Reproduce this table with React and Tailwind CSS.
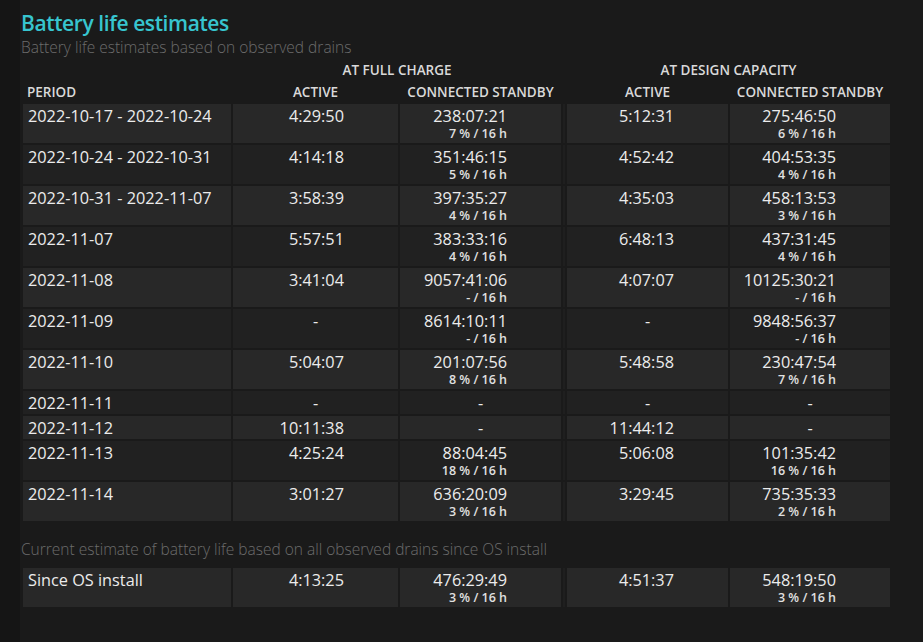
import React from "react";

const rows = [
  ["2022-10-17 - 2022-10-24", "4:29:50", "238:07:21", "7 %", "5:12:31", "275:46:50", "6 %"],
  ["2022-10-24 - 2022-10-31", "4:14:18", "351:46:15", "5 %", "4:52:42", "404:53:35", "4 %"],
  ["2022-10-31 - 2022-11-07", "3:58:39", "397:35:27", "4 %", "4:35:03", "458:13:53", "3 %"],
  ["2022-11-07", "5:57:51", "383:33:16", "4 %", "6:48:13", "437:31:45", "4 %"],
  ["2022-11-08", "3:41:04", "9057:41:06", "-", "4:07:07", "10125:30:21", "-"],
  ["2022-11-09", "-", "8614:10:11", "-", "-", "9848:56:37", "-"],
  ["2022-11-10", "5:04:07", "201:07:56", "8 %", "5:48:58", "230:47:54", "7 %"],
  ["2022-11-11", "-", "-", null, "-", "-", null],
  ["2022-11-12", "10:11:38", "-", null, "11:44:12", "-", null],
  ["2022-11-13", "4:25:24", "88:04:45", "18 %", "5:06:08", "101:35:42", "16 %"],
  ["2022-11-14", "3:01:27", "636:20:09", "3 %", "3:29:45", "735:35:33", "2 %"],
];

const sinceRow = ["Since OS install", "4:13:25", "476:29:49", "3 %", "4:51:37", "548:19:50", "3 %"];

function ValueCell({ value, sub, bg }) {
  if (value === "-") {
    return (
      <td className={`${bg} align-top pt-[2px] text-center leading-[21px]`}>
        -
      </td>
    );
  }
  return (
    <td className={`${bg} align-top pt-[2px] pr-[54px] text-right`}>
      <div className="leading-[21px]">{value}</div>
      {sub !== undefined && sub !== null && (
        <div className="h-4 pt-[1px] text-[12.5px] font-semibold leading-[12px] text-[#e0e0e0]">
          {sub} / 16 h
        </div>
      )}
    </td>
  );
}

function DataRow({ r, i }) {
  const bg = i % 2 === 0 ? "bg-[#282828]" : "bg-[#212121]";
  return (
    <tr>
      <td className={`${bg} align-top pt-[2px] pl-[5px] leading-[21px]`}>{r[0]}</td>
      <ValueCell value={r[1]} bg={bg} />
      <ValueCell value={r[2]} sub={r[3]} bg={bg} />
      <td className="bg-[#1f1f1f] p-0"></td>
      <ValueCell value={r[4]} bg={bg} />
      <ValueCell value={r[5]} sub={r[6]} bg={bg} />
    </tr>
  );
}

function Cols() {
  return (
    <colgroup>
      <col className="w-[208px]" />
      <col className="w-[165px]" />
      <col className="w-[161px]" />
      <col className="w-[2px]" />
      <col className="w-[161px]" />
      <col className="w-[160px]" />
    </colgroup>
  );
}

export default function App() {
  return (
    <div
      className="min-h-[642px] w-full bg-[#151515] text-[#ececec]"
      style={{ fontFamily: '"Open Sans", "Noto Sans", sans-serif' }}
    >
      <div className="ml-5 min-h-[642px] bg-[#1a1a1a] pl-[1px] pt-[9px]">
        <h1 className="text-[21px] font-semibold leading-[28px] tracking-[-0.4px] text-[#37c5cf]">
          Battery life estimates
        </h1>
        <div className="text-[15.5px] font-light leading-[20px] text-[#6c6c6c]">
          Battery life estimates based on observed drains
        </div>
        <table className="mt-[1px] w-[871px] table-fixed border-separate border-spacing-[2px] text-[16.3px]">
          <Cols />
          <thead>
            <tr className="text-[13.5px] font-semibold text-[#d9d9d9]">
              <td className="h-5 pt-[1px] leading-[19px]"></td>
              <td colSpan={2} className="h-5 pt-[1px] text-center leading-[19px]">
                AT FULL CHARGE
              </td>
              <td></td>
              <td colSpan={2} className="h-5 pt-[1px] text-center leading-[19px]">
                AT DESIGN CAPACITY
              </td>
            </tr>
            <tr className="text-[13.5px] font-semibold text-[#d9d9d9]">
              <td className="h-5 pl-[4px] pt-[1px] leading-[19px]">PERIOD</td>
              <td className="h-5 pt-[1px] text-center leading-[19px]">ACTIVE</td>
              <td className="h-5 pt-[1px] text-center leading-[19px]">CONNECTED STANDBY</td>
              <td></td>
              <td className="h-5 pt-[1px] text-center leading-[19px]">ACTIVE</td>
              <td className="h-5 pt-[1px] text-center leading-[19px]">CONNECTED STANDBY</td>
            </tr>
          </thead>
          <tbody>
            {rows.map((r, i) => (
              <DataRow key={i} r={r} i={i} />
            ))}
          </tbody>
        </table>
        <div className="mt-4 text-[15.5px] font-light leading-[20px] text-[#6c6c6c]">
          Current estimate of battery life based on all observed drains since OS install
        </div>
        <table className="mt-[7px] w-[871px] table-fixed border-separate border-spacing-[2px] text-[16.3px]">
          <Cols />
          <tbody>
            <DataRow r={sinceRow} i={0} />
          </tbody>
        </table>
      </div>
    </div>
  );
}
